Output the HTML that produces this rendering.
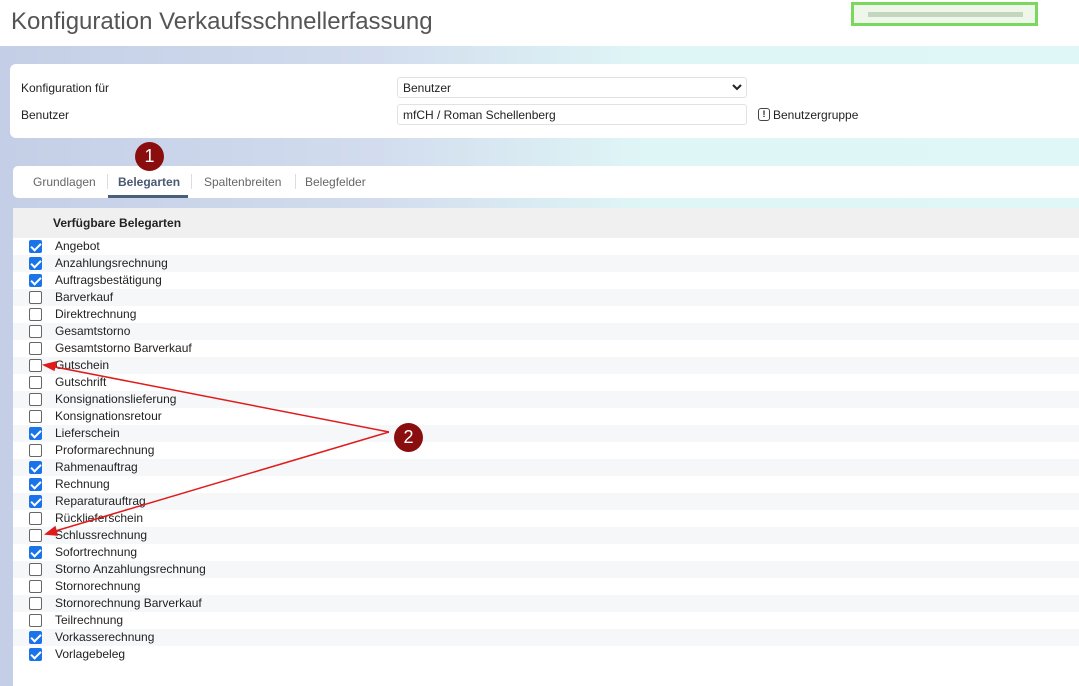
<!DOCTYPE html>
<html><head><meta charset="utf-8"><style>
*{box-sizing:border-box;margin:0;padding:0}
body{width:1079px;height:686px;overflow:hidden;font-family:"Liberation Sans",Arial,sans-serif;font-size:12px;color:#222;background:linear-gradient(90deg,#c4cee6 0%,#d2dcee 35%,#dff6f6 60%,#dff7f7 100%);position:relative}
.hdr{position:absolute;left:0;top:0;width:1079px;height:46px;background:#fff}
.hdr h1{position:absolute;left:11px;top:8px;font-weight:normal;font-size:24px;color:#555}
.blur{position:absolute;left:851px;top:2px;width:187px;height:24px;border:3px solid #7bd85e;background:#eef7ea}
.blur i{position:absolute;left:14px;top:7px;width:155px;height:5px;background:#c5d6be}
.card{position:absolute;left:10px;top:64px;width:1069px;height:74px;background:#fff;border-radius:6px 0 0 6px}
.lbl{position:absolute;left:11px}
.field{position:absolute;left:387px;width:350px;height:21px;border:1px solid #e2e2e2;border-radius:3px;padding:3px 5px;font-size:12px}
.tabs{position:absolute;left:13px;top:166px;width:1066px;height:32px;background:#fff;border-radius:5px 0 0 5px}
.tab{position:absolute;top:9px;color:#666}
.sep{position:absolute;top:8px;width:1px;height:15px;background:#ddd}
.panel{position:absolute;left:13px;top:208px;width:1066px;height:478px;background:#fff}
.ph{height:30px;background:#f0f0f0;font-weight:bold;padding:8px 0 0 40px}
.row{height:17px;position:relative;line-height:16px}
.row:nth-child(even){background:#f6f7f9}
.row span{position:absolute;left:42px;top:0}
.cb{position:absolute;left:16px;top:2px;width:13px;height:13px;border:1px solid #666;border-radius:2px;background:#fff}
.cb.on{background:#1a73e8;border-color:#1a73e8}
.cb.on:after{content:"";position:absolute;left:3px;top:0px;width:4px;height:8px;border:solid #fff;border-width:0 2px 2px 0;transform:rotate(45deg)}
.badge{position:absolute;width:29px;height:29px;border-radius:50%;background:#8b0e0e;color:#fff;font-size:18px;text-align:center;line-height:29px}
</style></head><body>
<div class="hdr"><h1>Konfiguration Verkaufsschnellerfassung</h1><div class="blur"><i></i></div></div>
<div class="card">
<div class="lbl" style="top:17px">Konfiguration für</div>
<div class="lbl" style="top:44px">Benutzer</div>
<div class="field" style="top:13px">Benutzer<svg style="position:absolute;right:4px;top:6px" width="10" height="7" viewBox="0 0 10 7"><path d="M1 1l4 4 4-4" stroke="#222" stroke-width="2" fill="none"/></svg></div>
<div class="field" style="top:40px">mfCH / Roman Schellenberg</div>
<div style="position:absolute;left:748px;top:44px;width:12px;height:13px;border:1.5px solid #444;border-radius:3px;font-size:9px;font-weight:bold;text-align:center;line-height:10px">!</div>
<div style="position:absolute;left:763px;top:44px">Benutzergruppe</div>
</div>
<div class="tabs">
<div class="tab" style="left:20px">Grundlagen</div><div class="sep" style="left:94px"></div>
<div class="tab" style="left:105px;font-weight:bold;color:#4a5a70">Belegarten</div>
<div style="position:absolute;left:95px;top:29px;width:80px;height:3px;background:#4a6078"></div>
<div class="sep" style="left:178px"></div>
<div class="tab" style="left:191px">Spaltenbreiten</div><div class="sep" style="left:282px"></div>
<div class="tab" style="left:292px">Belegfelder</div>
</div>
<div class="panel"><div class="ph">Verfügbare Belegarten</div>
<div>
<div class="row"><i class="cb on"></i><span>Angebot</span></div>
<div class="row"><i class="cb on"></i><span>Anzahlungsrechnung</span></div>
<div class="row"><i class="cb on"></i><span>Auftragsbestätigung</span></div>
<div class="row"><i class="cb"></i><span>Barverkauf</span></div>
<div class="row"><i class="cb"></i><span>Direktrechnung</span></div>
<div class="row"><i class="cb"></i><span>Gesamtstorno</span></div>
<div class="row"><i class="cb"></i><span>Gesamtstorno Barverkauf</span></div>
<div class="row"><i class="cb"></i><span>Gutschein</span></div>
<div class="row"><i class="cb"></i><span>Gutschrift</span></div>
<div class="row"><i class="cb"></i><span>Konsignationslieferung</span></div>
<div class="row"><i class="cb"></i><span>Konsignationsretour</span></div>
<div class="row"><i class="cb on"></i><span>Lieferschein</span></div>
<div class="row"><i class="cb"></i><span>Proformarechnung</span></div>
<div class="row"><i class="cb on"></i><span>Rahmenauftrag</span></div>
<div class="row"><i class="cb on"></i><span>Rechnung</span></div>
<div class="row"><i class="cb on"></i><span>Reparaturauftrag</span></div>
<div class="row"><i class="cb"></i><span>Rücklieferschein</span></div>
<div class="row"><i class="cb"></i><span>Schlussrechnung</span></div>
<div class="row"><i class="cb on"></i><span>Sofortrechnung</span></div>
<div class="row"><i class="cb"></i><span>Storno Anzahlungsrechnung</span></div>
<div class="row"><i class="cb"></i><span>Stornorechnung</span></div>
<div class="row"><i class="cb"></i><span>Stornorechnung Barverkauf</span></div>
<div class="row"><i class="cb"></i><span>Teilrechnung</span></div>
<div class="row"><i class="cb on"></i><span>Vorkasserechnung</span></div>
<div class="row"><i class="cb on"></i><span>Vorlagebeleg</span></div>
</div></div>
<svg style="position:absolute;left:0;top:0" width="1079" height="686">
<g stroke="#e01b1b" stroke-width="1.5" fill="#e01b1b">
<line x1="389" y1="432" x2="50" y2="366"/><polygon points="44,365 56,362 54,370"/>
<line x1="389" y1="432" x2="52" y2="532"/><polygon points="46,534 55,527 57,535"/>
</g></svg>
<div class="badge" style="left:135px;top:142px">1</div>
<div class="badge" style="left:394px;top:423px">2</div>
</body></html>
